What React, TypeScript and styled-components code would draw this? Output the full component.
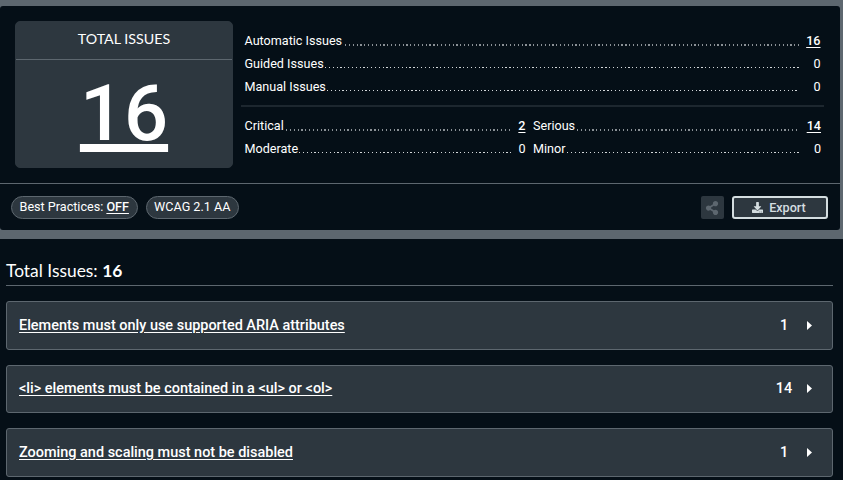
import React from "react";
import styled, { createGlobalStyle } from "styled-components";
import { FaDownload, FaShareAlt } from "react-icons/fa";

const GlobalStyle = createGlobalStyle`
  *, *::before, *::after { box-sizing: border-box; }
  body {
    margin: 0;
    background: #050f17;
    color: #fff;
    font-family: Roboto, sans-serif;
    font-size: 12.6px;
    overflow: hidden;
  }
  dl, dt, dd, h1, h2, p { margin: 0; font-weight: 400; }
`;

const Page = styled.main`
  width: 843px;
  height: 480px;
  overflow: hidden;
`;

const SummaryFrame = styled.section`
  height: 239px;
  padding: 6px 3px 9px 0;
  background: #5d676f;
`;

const Summary = styled.div`
  height: 224px;
  border-radius: 3px;
  background: #050f17;
`;

const Overview = styled.div`
  display: flex;
  height: 178px;
  padding: 15px 16px 0 15px;
  border-bottom: 1px solid #5d676f;
`;

const TotalCard = styled.div`
  flex: none;
  width: 218px;
  height: 147px;
  border: 1px solid #2d373f;
  border-radius: 5px;
  background: #2d373f;
  text-align: center;
`;

const TotalTitle = styled.h2`
  height: 38px;
  border-bottom: 1px solid #5d676f;
  font: 400 14.25px/34px Lato, sans-serif;
`;

const TotalValue = styled.div`
  padding-top: 12px;
  font-size: 77.6px;
  font-weight: 500;
  line-height: 84px;
  text-decoration: underline;
  text-decoration-thickness: 8px;
  text-underline-offset: 4px;
  text-decoration-skip-ink: none;
`;

const Stats = styled.div`
  flex: 1;
  min-width: 0;
  margin-left: 8px;
  padding-top: 9px;
`;

const StatGrid = styled.dl<{ $columns: number }>`
  display: grid;
  grid-template-columns: ${(p) => (p.$columns === 2 ? "281px 288px" : "1fr")};
  grid-auto-rows: 22.8px;
  column-gap: 7.5px;
  padding: 0 3.5px 0 3.5px;
`;

const StatRow = styled.div`
  display: flex;
  min-width: 0;
  line-height: 22.8px;
`;

const Leader = styled.span<{ $gap: number; $soft: boolean }>`
  flex: 1;
  min-width: 0;
  height: ${(p) => (p.$soft ? 2 : 1)}px;
  margin: 14px 0 0 ${(p) => p.$gap}px;
  background: repeating-linear-gradient(
    90deg,
    ${(p) => (p.$soft ? "#8b9196" : "#d3d7d9")} 0 1.2px,
    transparent 1.2px 3.84px
  );
`;

const StatValue = styled.dd<{ $linked: boolean; $width: number }>`
  width: ${(p) => p.$width}px;
  flex: none;
  font-weight: ${(p) => (p.$linked ? 500 : 400)};
  text-align: right;
  text-decoration: ${(p) => (p.$linked ? "underline" : "none")};
  text-underline-offset: 2px;
`;

const Divider = styled.div`
  height: 2px;
  margin: 7px 0 8px;
  background: #1d272f;
`;

const Toolbar = styled.div`
  display: flex;
  align-items: center;
  height: 46px;
  padding: 1px 12px 0 11px;
`;

const Pill = styled.span<{ $width: number }>`
  width: ${(p) => p.$width}px;
  height: 23px;
  margin-right: 8px;
  border: 1px solid #5d676f;
  border-radius: 12px;
  background: #2d373f;
  line-height: 20px;
  text-align: center;
  white-space: nowrap;
`;

const PillState = styled.span`
  font-weight: 500;
  text-decoration: underline;
  text-underline-offset: 2px;
`;

const ShareButton = styled.button`
  display: flex;
  align-items: center;
  justify-content: center;
  width: 23px;
  height: 23px;
  margin: 0 8px 0 auto;
  padding: 0 1px 0 0;
  border: 0;
  border-radius: 2px;
  background: #2d373f;
  color: #5d676f;
  font-size: 14px;
`;

const ExportButton = styled.button`
  display: flex;
  align-items: center;
  justify-content: center;
  gap: 6px;
  width: 96px;
  height: 23px;
  padding: 0 2px 0 0;
  border: 2px solid #d4dde0;
  border-radius: 3px;
  background: #2d373f;
  color: #d4dde0;
  font: 500 12.6px Roboto, sans-serif;
`;

const Results = styled.section`
  padding: 20px 10px 0 6px;
`;

const ResultsTitle = styled.h1`
  height: 27px;
  margin-bottom: 15px;
  border-bottom: 1px solid #5d676f;
  font: 400 17.4px/23px Lato, sans-serif;
`;

const IssueList = styled.div`
  display: grid;
  grid-auto-rows: 48.6px;
  row-gap: 15px;
`;

const Issue = styled.div`
  display: flex;
  align-items: center;
  padding: 0 20.5px 0 12px;
  border: 1px solid #5d676f;
  border-radius: 3px;
  background: #2d373f;
  font-size: 14.46px;
  font-weight: 500;
`;

const IssueName = styled.a`
  text-decoration: underline;
  text-underline-offset: 2px;
`;

const IssueCount = styled.span`
  width: 20px;
  margin-left: auto;
  text-align: center;
`;

const Arrow = styled.svg`
  width: 5px;
  height: 9px;
  margin-left: 12.5px;
  fill: #fff;
`;

type Stat = { name: string; value: number; gap?: number; width?: number };

const kinds: Stat[] = [
  { name: "Automatic Issues", value: 16, gap: 3 },
  { name: "Guided Issues", value: 0 },
  { name: "Manual Issues", value: 0 },
];

const impacts: Stat[] = [
  { name: "Critical", value: 2, gap: 2, width: 14 },
  { name: "Serious", value: 14, gap: 2 },
  { name: "Moderate", value: 0, width: 14 },
  { name: "Minor", value: 0, gap: 2 },
];

const issues: Stat[] = [
  { name: "Elements must only use supported ARIA attributes", value: 1 },
  { name: "<li> elements must be contained in a <ul> or <ol>", value: 14 },
  { name: "Zooming and scaling must not be disabled", value: 1 },
];

function StatList({ stats, columns }: { stats: Stat[]; columns: number }) {
  return (
    <StatGrid $columns={columns}>
      {stats.map((s) => (
        <StatRow key={s.name}>
          <dt>{s.name}</dt>
          <Leader $gap={s.gap ?? 1} $soft={s.value > 0} />
          <StatValue $linked={s.value > 0} $width={s.width ?? 22}>
            {s.value}
          </StatValue>
        </StatRow>
      ))}
    </StatGrid>
  );
}

export default function App() {
  return (
    <Page>
      <GlobalStyle />
      <SummaryFrame>
        <Summary>
          <Overview>
            <TotalCard>
              <TotalTitle>TOTAL ISSUES</TotalTitle>
              <TotalValue>16</TotalValue>
            </TotalCard>
            <Stats>
              <StatList stats={kinds} columns={1} />
              <Divider />
              <StatList stats={impacts} columns={2} />
            </Stats>
          </Overview>
          <Toolbar>
            <Pill $width={126.5}>
              Best Practices: <PillState>OFF</PillState>
            </Pill>
            <Pill $width={93.5}>WCAG 2.1 AA</Pill>
            <ShareButton aria-label="Share">
              <FaShareAlt />
            </ShareButton>
            <ExportButton>
              <FaDownload size={11} />
              Export
            </ExportButton>
          </Toolbar>
        </Summary>
      </SummaryFrame>
      <Results>
        <ResultsTitle>
          Total Issues: <strong>16</strong>
        </ResultsTitle>
        <IssueList>
          {issues.map((i) => (
            <Issue key={i.name}>
              <IssueName>{i.name}</IssueName>
              <IssueCount>{i.value}</IssueCount>
              <Arrow viewBox="0 0 5 9">
                <path d="M0 0L5 4.5L0 9Z" />
              </Arrow>
            </Issue>
          ))}
        </IssueList>
      </Results>
    </Page>
  );
}
